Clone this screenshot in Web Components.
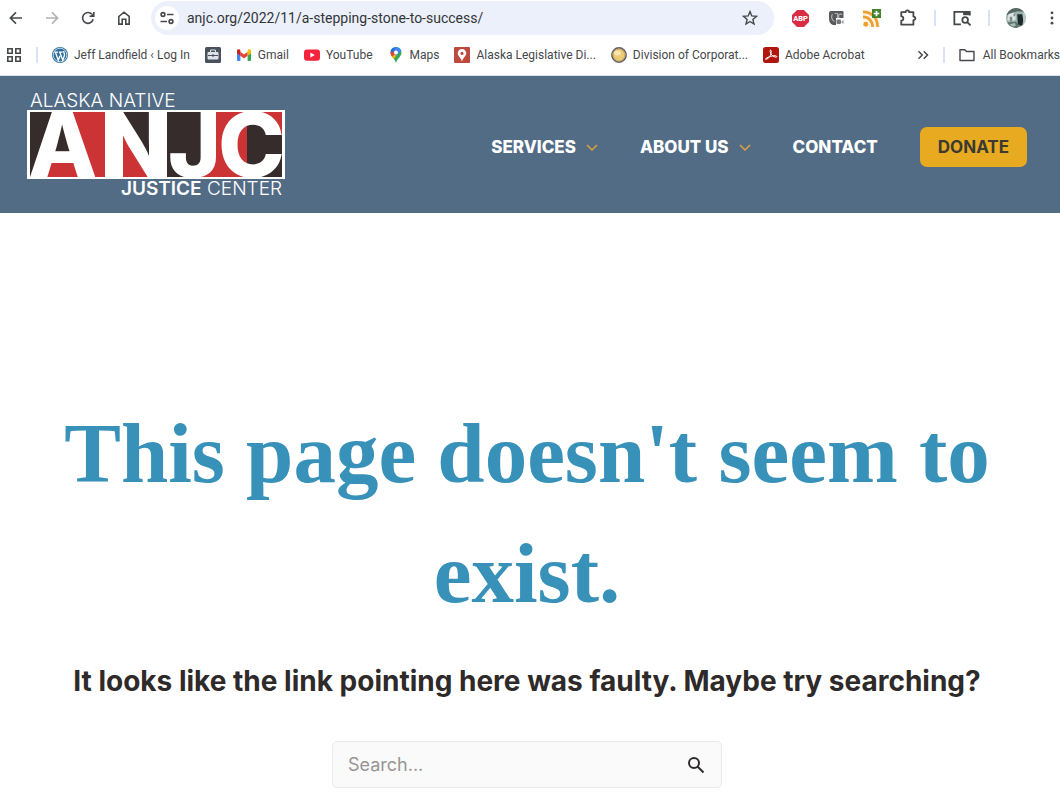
<!DOCTYPE html>
<html lang="en">
<head>
<meta charset="utf-8">
<meta name="viewport" content="width=device-width, initial-scale=1">
<title>Page not found - Alaska Native Justice Center</title>
<style>
	body {
		margin: 0;
		background: #fff;
		color: #2f2a2a;
		font-family: Inter, "Liberation Sans", sans-serif;
	}
</style>
</head>
<body>

<browser-toolbar url="anjc.org/2022/11/a-stepping-stone-to-success/"></browser-toolbar>

<bookmarks-bar>
	<bookmark-item icon="wordpress">Jeff Landfield ‹ Log In</bookmark-item>
	<bookmark-item icon="case" label="Briefcase"></bookmark-item>
	<bookmark-item icon="gmail">Gmail</bookmark-item>
	<bookmark-item icon="youtube">YouTube</bookmark-item>
	<bookmark-item icon="maps">Maps</bookmark-item>
	<bookmark-item icon="place">Alaska Legislative Di...</bookmark-item>
	<bookmark-item icon="seal">Division of Corporat...</bookmark-item>
	<bookmark-item icon="acrobat">Adobe Acrobat</bookmark-item>
</bookmarks-bar>

<site-header>
	<nav-item menu>SERVICES</nav-item>
	<nav-item menu>ABOUT US</nav-item>
	<nav-item>CONTACT</nav-item>
	<donate-button>DONATE</donate-button>
</site-header>

<not-found>
	<span slot="title">This page doesn't seem to exist.</span>
	<span slot="message">It looks like the link pointing here was faulty. Maybe try searching?</span>
	<search-form placeholder="Search..."></search-form>
</not-found>

<script>
const line = (size, body) => `<svg width="${size}" height="${size}" viewBox="0 0 16 16" fill="none" stroke="currentColor" stroke-width="1.6" aria-hidden="true">${body}</svg>`;
const solid = (size, body) => `<svg width="${size}" height="${size}" viewBox="0 0 16 16" aria-hidden="true">${body}</svg>`;

const icons = {
	back: line(16, `<path d="M14 8H2.8M8 2.4 2.4 8 8 13.600"/>`),
	forward: line(16, `<path d="M2 8h11.200M8 2.4 13.600 8 8 13.600"/>`),
	reload: line(16, `<path d="M13.200 9.300A5.400 5.400 0 1 1 12 4.300"/><path d="M13.800 2v4.300H9.500" /><path d="M13.600 3v3H10.500z" fill="currentColor" stroke="none"/>`),
	home: line(16, `<path d="M2.800 6.500 8 2.200l5.200 4.300v7.600H9.800V9.300H6.200v4.800H2.800z"/>`),
	tune: line(16, `<circle cx="4" cy="4.500" r="1.900"/><path d="M8 4.500h6.500M1.500 11.500H8"/><circle cx="12" cy="11.500" r="1.900"/>`),
	star: line(16, `<path stroke-width="1.400" d="m8 1.600 1.800 4.300 4.700.4-3.600 3.100 1.100 4.600L8 11.500l-4 2.500 1.100-4.600L1.500 6.300l4.700-.4z"/>`),
	abp: solid(17, `<path fill="#d92d43" d="M4.800 0h6.400L16 4.800v6.400L11.200 16H4.800L0 11.200V4.800z"/><text x="8" y="10.500" text-anchor="middle" font-family="Roboto, sans-serif" font-size="7" font-weight="900" fill="#fff">ABP</text>`),
	camera: solid(16, `<path fill="#58595b" d="M3 1h12l.5 1v6H8v7H5Q1 13.500 1 8V3q0-2 2-2z"/><path d="M4.500 4c-1.500 2-1.300 6 2 7.500M6.500 3.500h3v6M14 4.500c-3.500-1.200-4.500 2-2.500 3.800" fill="none" stroke="#aeb0b2" stroke-width="1.200"/><rect x="8" y="8" width="8" height="7" rx="1" fill="#fff"/><rect x="8.500" y="9.500" width="4.500" height="4.500" rx="1" fill="#777"/><path fill="#999" d="m13.500 11.500 2-1.500v4l-2-1.500z"/>`),
	feed: solid(18, `<rect y="1" width="15" height="15" fill="#fff5e8"/><g fill="none" stroke="#f0a030" stroke-width="2.400"><path d="M0 2.500C8 2.500 13 8 13 16M0 7c5 0 8.500 3.800 8.500 9"/></g><circle cx="2.500" cy="13.500" r="2.200" fill="#f0a030"/><rect x="8" width="8" height="8" fill="#43822d"/><path d="M12 1.500v5M9.500 4h5" stroke="#fff" stroke-width="1.500"/>`),
	puzzle: line(18, `<path d="M2 2.800h3.900c0-2.100 3.200-2.100 3.200 0h3.700v3.900c2.300 0 2.300 3.200 0 3.200v4H2v-3.600c2.500 0 2.500-3.800 0-3.800z" stroke-linejoin="round"/>`),
	tabs: line(18, `<path d="M7 13.600H1.200V2.500h13.600v3.200"/><path d="M9 2h6.400v3.500H9z" fill="currentColor" stroke="none"/><circle cx="10.800" cy="9.800" r="2.500"/><path d="m12.600 11.600 3 3"/>`),
	dots: solid(16, `<g fill="#46484b"><circle cx="8" cy="2.800" r="1.400"/><circle cx="8" cy="8" r="1.400"/><circle cx="8" cy="13.200" r="1.400"/></g>`),
	avatar: solid(20, `<defs><clipPath id="face"><circle cx="8" cy="8" r="8"/></clipPath></defs><g clip-path="url(#face)"><rect width="16" height="16" fill="#9cb0ac"/><path fill="#56675f" d="M0 0h16v3L9 2.500 3 4.500 0 6z"/><path fill="#dce4e3" d="m2 5 4-1.500 2 2-.5 4L3 11 1 9z"/><path fill="#7b8f89" d="M3 7h2v4H3zM6 4.500h1.500v2H6z"/><path fill="#1e2b2c" d="M9 5h4l.8 5-.8 4H9.500z"/><path fill="#b9c8c9" d="M13.500 4H16v8l-2 1z"/><path fill="#5d736b" d="M0 11.500 8 11l3 3-2 2H0z"/><path fill="#a9bab6" d="m3 13 4-1 1 2-3 1z"/></g>`),
	grid: line(16, `<path d="M1.800 1.800h4.400v4.400H1.800zM9.800 1.800h4.400v4.400H9.800zM1.800 9.800h4.400v4.400H1.800zM9.800 9.800h4.400v4.400H9.800z"/>`),
	more: line(12, `<path stroke-width="2" d="m2 3 5 5-5 5M9 3l5 5-5 5"/>`),
	folder: line(16, `<path stroke-width="1.400" d="M1 2.800h4.800l1.700 1.700H15v9H1z" stroke-linejoin="round"/>`),
	wordpress: solid(16, `<circle cx="8" cy="8" r="8" fill="#2c6f9e"/><circle cx="8" cy="8" r="6.800" fill="none" stroke="#fff" stroke-width=".7"/><path d="M2.300 5.200h3.800M7 5.200h3.700M3.400 5.300l2.900 8L8 8.800M7.800 5.300l3 8 1.500-4.600c.8-2-.8-2.900-.6-4.700" fill="none" stroke="#fff" stroke-width="1.300"/>`),
	"case": solid(16, `<rect width="16" height="16" rx="1.500" fill="#49505e"/><path d="M5.500 5V3h5v2" fill="none" stroke="#dfe3e8"/><rect x="2.500" y="5" width="11" height="7.500" rx="1" fill="#dfe3e8"/><path d="M3 8.500h4M9 8.500h4" stroke="#49505e"/><rect x="7" y="7.500" width="2" height="2" fill="#49505e"/>`),
	gmail: solid(16, `<path fill="#4285f4" d="M1 3.500 4.400 6v8H2a1 1 0 0 1-1-1z"/><path fill="#34a853" d="M11.600 6 15 3.500V13a1 1 0 0 1-1 1h-2.400z"/><path fill="#ea4335" d="M4.400 4.800 8 7.500l3.600-2.700V8.700L8 11.400 4.400 8.700z"/><path fill="#c5221f" d="M1 4.500V4c0-1.500 1.600-2.200 2.700-1.400l.7.600v5.500L1 6.200z"/><path fill="#fbbc04" d="M15 4.500V4c0-1.500-1.600-2.200-2.700-1.400l-.7.600v5.500L15 6.200z"/>`),
	youtube: solid(16, `<rect y="2.500" width="16" height="11.300" rx="3" fill="#f5233b"/><path fill="#fff" d="m6.300 5.600 4.500 2.500-4.500 2.600z"/>`),
	maps: solid(16, `<defs><clipPath id="drop"><path d="M8 0a5.500 5.500 0 0 0-5.500 5.500C2.500 9.500 6.500 11 8 16c1.500-5 5.500-6.500 5.500-10.500A5.500 5.500 0 0 0 8 0z"/></clipPath></defs><g clip-path="url(#drop)"><path fill="#34a853" d="M0 0h16v16H0z"/><path fill="#fbbc04" d="M0 12 9 3v5l-5 6z"/><path fill="#ea4335" d="M0 2h5l4 3-6 6H0z"/><path fill="#1a73e8" d="M4 0h5L4 6 2 3z"/><path fill="#4285f4" d="M7 0h7v3L8 9 6 6z"/></g><circle cx="8" cy="5.500" r="2" fill="#fff"/>`),
	place: solid(16, `<rect width="16" height="16" rx="1" fill="#bd4a3c"/><path fill="#fff" fill-rule="evenodd" d="M8 2a4.300 4.300 0 0 0-4.300 4.300C3.700 9 7 11 8 14.500 9 11 12.300 9 12.300 6.300A4.300 4.300 0 0 0 8 2zm0 2.800a1.600 1.600 0 1 1 0 3.200 1.600 1.600 0 0 1 0-3.200z"/>`),
	seal: solid(16, `<circle cx="8" cy="8" r="7.200" fill="#eccb75" stroke="#625c68" stroke-width="1.400"/><circle cx="8" cy="8" r="5.800" fill="none" stroke="#c4a560" stroke-width=".8"/><ellipse cx="6.500" cy="6" rx="3.500" ry="2.500" fill="#f8e6ac"/>`),
	acrobat: solid(16, `<rect width="16" height="16" rx="2.500" fill="#b11510"/><path d="M3 12.300c3-.8 5.500-4.300 5.200-8.200-.1-1.500-1.500-1.200-1.200.2.600 3 3 5.800 6 5.900 1.300 0 1-1.500-.6-1.500-3.500 0-6.500 1-9.300 2.600-.8.500-.8 1.200-.1 1z" fill="none" stroke="#fff"/>`),
	chevron: `<svg width="12" height="12" viewBox="0 0 12 12" fill="none" stroke="#dfa23c" stroke-width="1.500" aria-hidden="true"><path d="m1 4 5 5 5-5"/></svg>`,
	search: `<svg width="18" height="18" viewBox="0 0 18 18" fill="none" stroke="currentColor" stroke-width="2" aria-hidden="true"><circle cx="7" cy="7" r="5"/><path d="m10.500 10.500 6 6"/></svg>`
};

class BrowserToolbar extends HTMLElement {

	constructor() {
		super();
		this.attachShadow({ mode: "open" });
	}

	connectedCallback() {
		this.shadowRoot.innerHTML = this.render();
	}

	button(icon, label) {
		return `<button type="button" class="${icon}" aria-label="${label}">${icons[icon]}</button>`;
	}

	render() {
		return `
			<style>
				:host {
					display: flex;
					align-items: center;
					gap: 8px;
					padding: 1px 0 0 2px;
					color: #46484b;
				}
				button {
					display: grid;
					place-items: center;
					flex: none;
					width: 28px;
					height: 28px;
					padding: 0;
					border: 0;
					border-radius: 50%;
					background: none;
					color: inherit;
				}
				.forward { color: #b0b1b3; }
				.address {
					display: flex;
					align-items: center;
					flex: 1;
					min-width: 0;
					gap: 8px;
					height: 34px;
					margin: 0 4px 0 5px;
					padding: 0 10px 0 4px;
					box-sizing: border-box;
					border-radius: 17px;
					background: #ebf0fa;
				}
				.address .tune {
					width: 24px;
					height: 24px;
					background: #fff;
				}
				input {
					flex: 1;
					min-width: 0;
					padding: 0;
					border: 0;
					outline: 0;
					background: none;
					color: #333538;
					font: 14px/20px Roboto, "Noto Sans", sans-serif;
				}
				.rule {
					width: 2px;
					height: 16px;
					margin: 0 4px;
					background: #d5e2f8;
				}
				.dots {
					width: 16px;
					margin-left: 6px;
				}
			</style>
			${this.button("back", "Back")}
			${this.button("forward", "Forward")}
			${this.button("reload", "Reload")}
			${this.button("home", "Home")}
			<div class="address">
				${this.button("tune", "Site information")}
				<input type="text" aria-label="Address" value="${this.getAttribute("url")}">
				${this.button("star", "Bookmark this tab")}
			</div>
			${this.button("abp", "Ad blocker")}
			${this.button("camera", "Capture")}
			${this.button("feed", "Subscribe to feed")}
			${this.button("puzzle", "Extensions")}
			<span class="rule"></span>
			${this.button("tabs", "Search tabs")}
			<span class="rule"></span>
			${this.button("avatar", "Profile")}
			${this.button("dots", "Menu")}
		`;
	}

}

class BookmarksBar extends HTMLElement {

	constructor() {
		super();
		this.attachShadow({ mode: "open" });
	}

	connectedCallback() {
		this.shadowRoot.innerHTML = `
			<style>
				:host {
					display: flex;
					align-items: center;
					height: 40px;
					padding-left: 6px;
					border-bottom: 1px solid #d9e3f2;
					overflow: hidden;
					color: #46484b;
					font: 12px/16px Roboto, "Noto Sans", sans-serif;
					white-space: nowrap;
				}
				.items {
					display: flex;
					gap: 15px;
					flex: 1;
				}
				button {
					display: flex;
					align-items: center;
					gap: 8px;
					padding: 0;
					border: 0;
					background: none;
					color: inherit;
					font: inherit;
				}
				.rule {
					flex: none;
					width: 2px;
					height: 16px;
					margin: 0 14px;
					background: #d5e2f8;
				}
			</style>
			<button type="button" aria-label="Tab groups">${icons.grid}</button>
			<span class="rule"></span>
			<div class="items"><slot></slot></div>
			<button type="button" aria-label="More bookmarks">${icons.more}</button>
			<span class="rule"></span>
			<button type="button">${icons.folder}All Bookmarks</button>
		`;
	}

}

class BookmarkItem extends HTMLElement {

	constructor() {
		super();
		this.attachShadow({ mode: "open" });
	}

	connectedCallback() {
		const label = this.getAttribute("label");

		this.shadowRoot.innerHTML = `
			<style>
				:host { display: block; }
				a {
					display: flex;
					align-items: center;
					gap: 6px;
					color: inherit;
					text-decoration: none;
				}
				svg { flex: none; }
			</style>
			<a href="#" ${label ? `aria-label="${label}"` : ""}>${icons[this.getAttribute("icon")]}${label ? "" : "<span><slot></slot></span>"}</a>
		`;
	}

}

class SiteLogo extends HTMLElement {

	constructor() {
		super();
		this.attachShadow({ mode: "open" });
	}

	connectedCallback() {
		this.shadowRoot.innerHTML = `
			<style>
				:host { display: block; }
				a, svg { display: block; }
				svg { overflow: visible; }
				text { font-family: Inter, sans-serif; fill: #fff; }
				.big { font-size: 90px; font-weight: 800; }
				.small { font-size: 19px; font-weight: 300; }
				.strong { font-weight: 600; }
			</style>
			<a href="#" aria-label="Alaska Native Justice Center">
				<svg width="258" height="106" viewBox="0 0 258 106">
					<text class="small" x="3" y="15">ALASKA NATIVE</text>
					<rect y="18" width="258" height="69" fill="#fff"/>
					<!-- red and dark panels behind the initials -->
					<path fill="#cb3335" d="M3 20h75v65H3z"/>
					<path fill="#352c2b" d="M3 20h36v44H24l-8 21H3z"/>
					<path fill="#352c2b" d="M39 40 52 64H28z"/>
					<path fill="#cb3335" d="M96 20v65h27z"/>
					<path fill="#352c2b" d="M96 20h26v65z"/>
					<path fill="#352c2b" d="M140 20h36v65h-36z"/>
					<path fill="#cb3335" d="M176 20h79v33h-35v32h-44z"/>
					<path fill="#352c2b" d="M220 30h24l11 14v41h-35z"/>
					<text class="big" x="1 74 141 191" y="85">ANJC</text>
					<text class="small" x="255" y="103" text-anchor="end"><tspan class="strong">JUSTICE</tspan> CENTER</text>
				</svg>
			</a>
		`;
	}

}

class SiteHeader extends HTMLElement {

	constructor() {
		super();
		this.attachShadow({ mode: "open" });
	}

	connectedCallback() {
		this.shadowRoot.innerHTML = `
			<style>
				:host {
					display: flex;
					align-items: center;
					justify-content: space-between;
					padding: 16px 33px 15px 27px;
					background: #526c86;
					color: #fff;
				}
				nav {
					display: flex;
					align-items: center;
					gap: 42px;
					padding-top: 4px;
				}
			</style>
			<site-logo></site-logo>
			<nav><slot></slot></nav>
		`;
	}

}

class NavItem extends HTMLElement {

	constructor() {
		super();
		this.attachShadow({ mode: "open" });
	}

	connectedCallback() {
		this.shadowRoot.innerHTML = `
			<style>
				:host { display: block; }
				a {
					display: flex;
					align-items: center;
					gap: 10px;
					color: inherit;
					font-size: 17px;
					font-weight: 800;
					line-height: 24px;
					text-decoration: none;
				}
			</style>
			<a href="#"><span><slot></slot></span>${this.hasAttribute("menu") ? icons.chevron : ""}</a>
		`;
	}

}

class DonateButton extends HTMLElement {

	constructor() {
		super();
		this.attachShadow({ mode: "open" });
	}

	connectedCallback() {
		this.shadowRoot.innerHTML = `
			<style>
				:host { display: block; }
				button {
					display: block;
					padding: 8px 18px;
					border: 0;
					border-radius: 7px;
					background: #e8aa20;
					color: #3b3a32;
					font: 700 17px/24px Inter, sans-serif;
				}
			</style>
			<button type="button"><slot></slot></button>
		`;
	}

}

class NotFound extends HTMLElement {

	constructor() {
		super();
		this.attachShadow({ mode: "open" });
	}

	connectedCallback() {
		this.shadowRoot.innerHTML = `
			<style>
				:host {
					display: flex;
					flex-direction: column;
					align-items: center;
					padding: 180px 46px 12px 40px;
					text-align: center;
				}
				h1 {
					margin: 0;
					color: #3791b9;
					font: 700 85px/120px "Liberation Serif", serif;
				}
				p {
					margin: 28px 0 40px;
					font-size: 28px;
					font-weight: 700;
					line-height: 40px;
				}
			</style>
			<h1><slot name="title"></slot></h1>
			<p><slot name="message"></slot></p>
			<slot></slot>
		`;
	}

}

class SearchForm extends HTMLElement {

	constructor() {
		super();
		this.attachShadow({ mode: "open" });
	}

	connectedCallback() {
		this.shadowRoot.innerHTML = `
			<style>
				:host {
					display: block;
					width: 100%;
					max-width: 390px;
				}
				form {
					display: flex;
					align-items: center;
					padding: 0 16px 0 15px;
					border: 1px solid #ebebe6;
					border-radius: 5px;
					background: #fafafa;
				}
				input {
					flex: 1;
					min-width: 0;
					height: 45px;
					padding: 0;
					border: 0;
					outline: 0;
					background: none;
					color: #2f2a2a;
					font: 18px/24px Inter, sans-serif;
				}
				input::placeholder { color: #999594; }
				button {
					display: flex;
					padding: 0;
					border: 0;
					background: none;
					color: #2f2a2a;
				}
			</style>
			<form role="search">
				<input type="search" aria-label="Search" placeholder="${this.getAttribute("placeholder")}">
				<button type="submit" aria-label="Submit search">${icons.search}</button>
			</form>
		`;
	}

}

window.customElements.define("browser-toolbar", BrowserToolbar);
window.customElements.define("bookmarks-bar", BookmarksBar);
window.customElements.define("bookmark-item", BookmarkItem);
window.customElements.define("site-logo", SiteLogo);
window.customElements.define("site-header", SiteHeader);
window.customElements.define("nav-item", NavItem);
window.customElements.define("donate-button", DonateButton);
window.customElements.define("not-found", NotFound);
window.customElements.define("search-form", SearchForm);
</script>
</body>
</html>
